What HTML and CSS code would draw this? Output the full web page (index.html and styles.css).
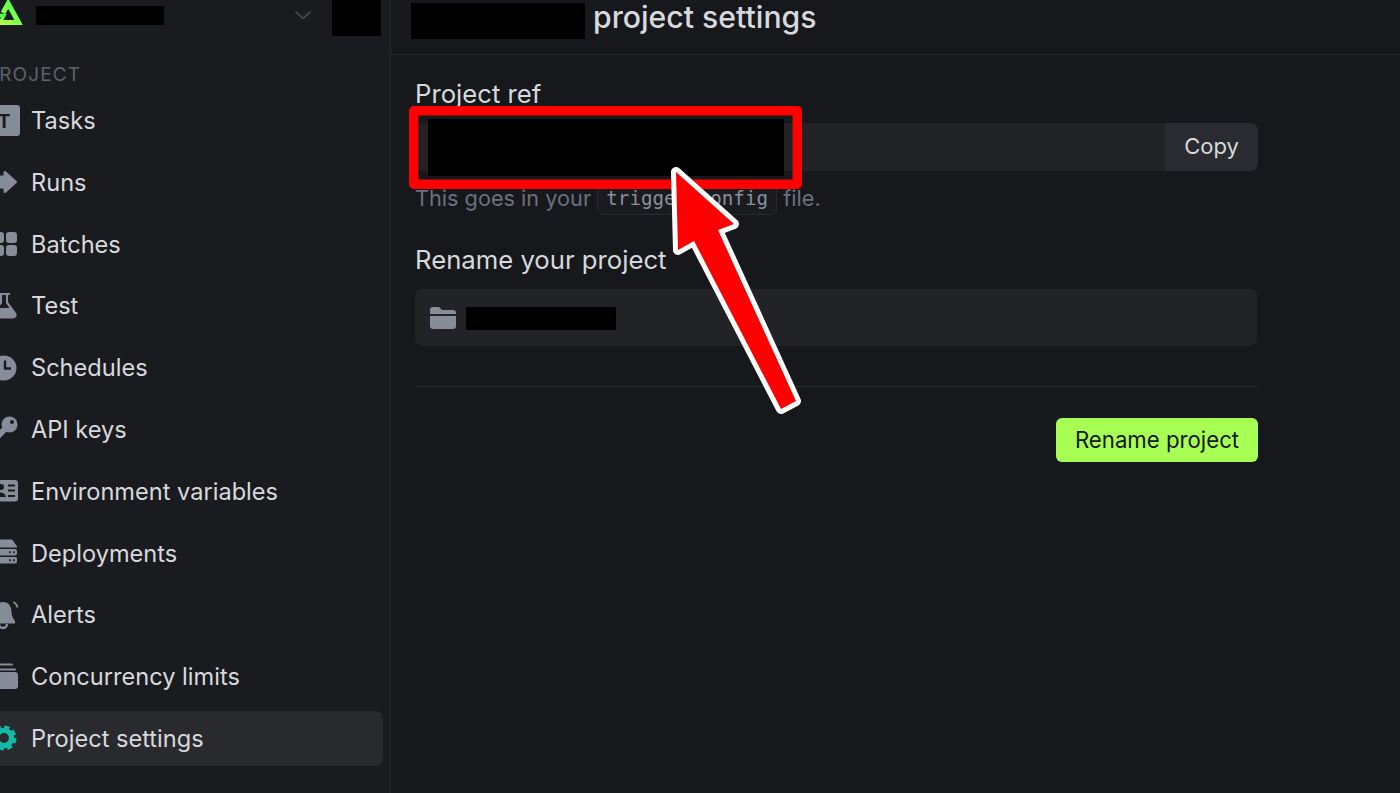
FILE: index.html
```html
<!DOCTYPE html>
<html lang="en">
  <head>
    <meta charset="UTF-8" />
    <meta name="viewport" content="width=device-width, initial-scale=1.0" />
    <title>Project settings</title>
    <link rel="stylesheet" href="styles.css">
  </head>
  <body>
    <div class="app">
      <aside class="sidebar">
        <div class="sidebar-head">
          <svg class="logo" width="30" height="30" viewBox="0 0 30 30">
            <defs>
              <linearGradient id="logo-grad" x1="0" y1="1" x2="1" y2="0">
                <stop offset="0" stop-color="#c4ff3f" />
                <stop offset="1" stop-color="#41ff54" />
              </linearGradient>
            </defs>
            <path d="M9 13 L14.2 3.5 L24.6 22.6 L2 22.6" fill="none" stroke="url(#logo-grad)" stroke-width="5" />
            <path d="M3 15.5 H10 L7 21" fill="none" stroke="url(#logo-grad)" stroke-width="3.4" />
          </svg>
          <span class="redact redact-org"></span>
          <svg class="chevron" width="18" height="10" viewBox="0 0 18 10">
            <path d="M1.5 1.5 L9 8.5 L16.5 1.5" fill="none" stroke="#4b5058" stroke-width="1.6" />
          </svg>
          <span class="redact redact-avatar"></span>
        </div>
        <div class="side-label">PROJECT</div>
        <nav class="nav">
          <a class="nav-item">
            <svg class="nav-icon" viewBox="0 0 32 32">
              <rect x="0" y="0" width="32" height="31" rx="3" fill="#878c99" />
              <text x="16" y="23" text-anchor="middle" class="tile-letter">T</text>
            </svg>
            Tasks
          </a>
          <a class="nav-item">
            <svg class="nav-icon" viewBox="0 0 32 32">
              <path d="M3 11 H17 V6.5 L27.5 16 L17 25.5 V21 H3 Z" fill="#878c99" stroke="#878c99" stroke-width="3" stroke-linejoin="round" />
            </svg>
            Runs
          </a>
          <a class="nav-item">
            <svg class="nav-icon" viewBox="0 0 32 32">
              <rect x="5" y="4" width="11" height="11" rx="3" fill="#878c99" />
              <rect x="18" y="4" width="11" height="11" rx="3" fill="#878c99" />
              <rect x="5" y="17" width="11" height="11" rx="3" fill="#878c99" />
              <rect x="18" y="17" width="11" height="11" rx="3" fill="#878c99" />
            </svg>
            Batches
          </a>
          <a class="nav-item">
            <svg class="nav-icon" viewBox="0 0 32 32">
              <path fill-rule="evenodd" fill="#878c99" d="M10 3 H22 V5 H20 V12 L28 23 A3.5 3.5 0 0 1 25 28.5 H7 A3.5 3.5 0 0 1 4 23 L12 12 V5 H10 Z M14 5 V13 L10.5 18 H21.5 L18 13 V5 Z" />
            </svg>
            Test
          </a>
          <a class="nav-item">
            <svg class="nav-icon" viewBox="0 0 32 32">
              <circle cx="16" cy="16" r="12.5" fill="#878c99" />
              <path d="M17 8.5 V16.5 H23" fill="none" stroke="#1a1b1f" stroke-width="2.4" />
            </svg>
            Schedules
          </a>
          <a class="nav-item">
            <svg class="nav-icon" viewBox="0 0 32 32">
              <circle cx="21.5" cy="11.5" r="8" fill="#878c99" />
              <circle cx="24" cy="9" r="2" fill="#1a1b1f" />
              <path d="M20 13 L7 26" stroke="#878c99" stroke-width="6" stroke-linecap="round" />
            </svg>
            API keys
          </a>
          <a class="nav-item">
            <svg class="nav-icon" viewBox="0 0 32 32">
              <rect x="0" y="5" width="30" height="21.5" rx="3" fill="#878c99" />
              <circle cx="13" cy="12" r="3" fill="#1a1b1f" />
              <path d="M7 22 C8 16 17 16 18 22 Z" fill="#1a1b1f" />
              <path d="M20 10.5 H27 M20 15.5 H27 M20 21 H27" stroke="#1a1b1f" stroke-width="2" />
            </svg>
            Environment variables
          </a>
          <a class="nav-item">
            <svg class="nav-icon" viewBox="0 0 32 32">
              <path d="M8 3 H24 L29 10 H3 Z" fill="#878c99" stroke="#878c99" stroke-width="1" stroke-linejoin="round" />
              <rect x="3" y="12" width="26" height="6.5" rx="2" fill="#878c99" />
              <rect x="3" y="20" width="26" height="6.5" rx="2" fill="#878c99" />
              <path d="M21 15.2 H22.6 M25 15.2 H26.6 M21 23.2 H22.6 M25 23.2 H26.6" stroke="#1a1b1f" stroke-width="2" />
            </svg>
            Deployments
          </a>
          <a class="nav-item">
            <svg class="nav-icon" viewBox="0 0 32 32">
              <path d="M15 3 C21 3 23.5 8 23.5 13 C23.5 18 26 20 27 22 V24.5 H3 V22 C4 20 6.5 18 6.5 13 C6.5 8 9 3 15 3 Z" fill="#878c99" />
              <path d="M11 25 A4 4 0 0 0 19 25" fill="none" stroke="#878c99" stroke-width="2.4" />
              <path d="M25.5 3 A8 8 0 0 1 29.5 8.5" fill="none" stroke="#878c99" stroke-width="1.8" />
            </svg>
            Alerts
          </a>
          <a class="nav-item">
            <svg class="nav-icon" viewBox="0 0 32 32">
              <path d="M6 3.5 H24 M5 8.5 H27" stroke="#878c99" stroke-width="2.2" stroke-linecap="round" />
              <path d="M3 11 H27 A3 3 0 0 1 30 14 V25 A3 3 0 0 1 27 28 H3 Z" fill="#878c99" />
            </svg>
            Concurrency limits
          </a>
          <a class="nav-item is-active">
            <svg class="nav-icon" viewBox="0 0 32 32">
              <circle cx="16" cy="16" r="7.6" fill="none" stroke="#14b8a6" stroke-width="5.4" />
              <circle cx="16" cy="16" r="11" fill="none" stroke="#14b8a6" stroke-width="3" stroke-dasharray="5.2 3.44" />
            </svg>
            Project settings
          </a>
        </nav>
      </aside>

      <main class="main">
        <header class="main-head">
          <span class="redact redact-title"></span>
          <h1>project settings</h1>
        </header>
        <section class="content">
          <label class="field-label">Project ref</label>
          <div class="copy-field">
            <div class="copy-value"></div>
            <button class="copy-btn" type="button">Copy</button>
          </div>
          <p class="hint">This goes in your <code class="chip">trigger.config</code> file.</p>

          <label class="field-label rename-label">Rename your project</label>
          <div class="name-input">
            <svg class="folder" width="26" height="22" viewBox="0 0 26 22">
              <path d="M0 3 A3 3 0 0 1 3 0 H9 L12 3 H23 A3 3 0 0 1 26 6 V7 H0 Z" fill="#878c99" />
              <path d="M0 9 H26 V19 A3 3 0 0 1 23 22 H3 A3 3 0 0 1 0 19 Z" fill="#878c99" />
            </svg>
            <span class="redact redact-name"></span>
          </div>
          <hr class="divider" />
          <div class="actions">
            <button class="primary" type="button">Rename project</button>
          </div>
        </section>
      </main>
    </div>

    <!-- screenshot markup drawn on top of the page -->
    <svg class="annotation" width="1400" height="793" viewBox="0 0 1400 793">
      <rect x="428" y="119" width="356" height="57" fill="#000" />
      <rect x="413.7" y="110.7" width="383.6" height="73.6" fill="none" stroke="#fe0000" stroke-width="9.4" stroke-linejoin="round" />
      <polygon points="676,172 734,224 718,230 796,401 781,409 694,241 678,250" fill="#fe0000" stroke="#fff" stroke-width="10" stroke-linejoin="round" paint-order="stroke" />
    </svg>
  </body>
</html>
```

FILE: styles.css
```css
:root {
  --main-bg: #16181c;
  --side-bg: #1a1b1f;
  --line: #26282c;
  --field-bg: #212327;
  --text: #d7d9dd;
  --muted: #6b7080;
}
* {
  box-sizing: border-box;
}
html,
body {
  margin: 0;
  padding: 0;
  height: 100%;
  overflow: hidden;
  background: var(--main-bg);
  font-family: "Inter", "Liberation Sans", sans-serif;
  color: var(--text);
}
.app {
  display: flex;
  height: 793px;
}
.redact {
  display: block;
  background: #000;
  flex: none;
}

/* sidebar */
.sidebar {
  width: 391px;
  flex: none;
  background: var(--side-bg);
  border-right: 1px solid var(--line);
  padding-right: 7px;
}
.sidebar-head {
  height: 54px;
  display: flex;
  align-items: flex-start;
}
.logo {
  margin-left: -6px;
  flex: none;
}
.redact-org {
  width: 128px;
  height: 19px;
  margin: 6px 0 0 12px;
}
.chevron {
  margin: 10px 0 0 130px;
  flex: none;
}
.redact-avatar {
  width: 49px;
  height: 36px;
  margin-left: 20px;
}
.side-label {
  height: 39px;
  margin-left: -14px;
  padding-top: 11px;
  font-size: 19px;
  line-height: 20px;
  letter-spacing: 1.1px;
  color: #5c616c;
}
.nav {
  display: flex;
  flex-direction: column;
  gap: 6.8px;
}
.nav-item {
  height: 55px;
  display: flex;
  align-items: center;
  gap: 11px;
  font-size: 23.6px;
  color: var(--text);
  border-radius: 0 8px 8px 0;
}
.nav-item.is-active {
  background: #292a2e;
}
.nav-icon {
  width: 32px;
  height: 32px;
  margin-left: -12px;
  flex: none;
  overflow: visible;
}
.tile-letter {
  font-family: "Inter", sans-serif;
  font-size: 19px;
  font-weight: 700;
  fill: #1a1b1f;
}

/* main column */
.main {
  flex: 1;
  min-width: 0;
}
.main-head {
  height: 55px;
  border-bottom: 1px solid var(--line);
  padding-left: 20px;
  display: flex;
  align-items: flex-start;
  gap: 8px;
}
.redact-title {
  width: 174px;
  height: 36px;
  margin-top: 3px;
}
.main-head h1 {
  margin: 0;
  font-size: 30.2px;
  line-height: 34px;
  font-weight: 500;
  color: var(--text);
}
.content {
  width: 867px;
  padding: 24px 0 0 24px;
}
.field-label {
  display: block;
  font-size: 25.7px;
  line-height: 30px;
  color: var(--text);
}
.copy-field {
  margin-top: 14px;
  height: 48px;
  display: flex;
  border-radius: 8px;
  overflow: hidden;
  background: var(--field-bg);
}
.copy-value {
  flex: 1;
}
.copy-btn {
  width: 93px;
  border: 0;
  padding: 0 0 2px;
  background: #2a2b30;
  color: var(--text);
  font-family: inherit;
  font-size: 22px;
}
.hint {
  margin: 10px 0 0;
  height: 34px;
  display: flex;
  align-items: center;
  font-size: 21.7px;
  color: var(--muted);
  white-space: pre;
}
.chip {
  height: 34px;
  width: 180px;
  padding: 0 9px;
  display: flex;
  align-items: center;
  justify-content: center;
  border: 1px solid #292b30;
  border-radius: 6px;
  background: #191b1f;
  font-family: "DejaVu Sans Mono", "Liberation Mono", monospace;
  font-size: 19.2px;
  color: #8a8f9c;
}
.rename-label {
  margin-top: 30px;
}
.name-input {
  margin-top: 14px;
  width: 842px;
  height: 57px;
  padding-left: 15px;
  display: flex;
  align-items: center;
  gap: 10px;
  border-radius: 8px;
  background: var(--field-bg);
}
.folder {
  flex: none;
}
.redact-name {
  width: 150px;
  height: 23px;
  margin-top: 2px;
}
.divider {
  margin: 40px 0 0;
  border: 0;
  height: 1px;
  background: #2b2d32;
}
.actions {
  margin-top: 31px;
  display: flex;
  justify-content: flex-end;
}
.primary {
  width: 202px;
  height: 44px;
  border: 0;
  padding: 0 0 2px;
  border-radius: 6px;
  background: #a8ff53;
  color: #15171a;
  font-family: inherit;
  font-size: 22.2px;
}
.annotation {
  position: absolute;
  top: 0;
  left: 0;
  pointer-events: none;
}
```
